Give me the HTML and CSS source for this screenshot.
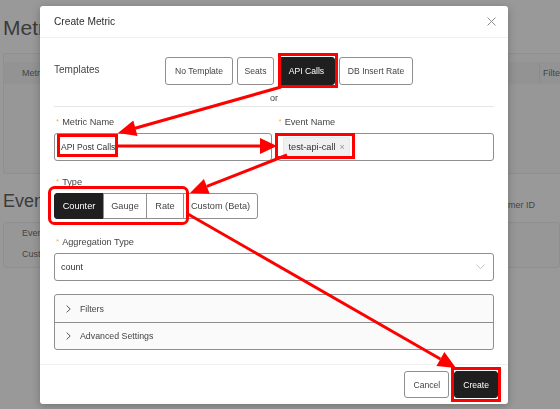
FILE: index.html
```html
<!DOCTYPE html>
<html lang="en">
<head>
<meta charset="utf-8">
<title>Create Metric</title>
<link rel="stylesheet" href="styles.css">
</head>
<body>
<div class="page">
  <h1 class="page-title">Metr</h1>
  <div class="card metrics-card">
    <div class="table-head">
      <span class="th th-first">Metr</span>
      <span class="th th-filter">Filte</span>
    </div>
  </div>
  <div class="events-row">
    <h2 class="events-title">Even</h2>
    <span class="events-col">omer ID</span>
  </div>
  <div class="card events-card">
    <div class="ev-line">Even</div>
    <div class="ev-line">Cust</div>
  </div>
</div>

<div class="modal">
  <div class="modal-header">
    <span class="modal-title">Create Metric</span>
    <svg class="close" width="9" height="9" viewBox="0 0 9 9"><path d="M0.5 0.5 L8.5 8.5 M8.5 0.5 L0.5 8.5" stroke="#8c8c8c" stroke-width="1" fill="none"/></svg>
  </div>
  <div class="modal-body">
    <div class="tpl-row">
      <span class="tpl-label">Templates</span>
      <div class="tpl-buttons">
        <span class="btn tpl-none">No Template</span>
        <span class="btn tpl-seats">Seats</span>
        <span class="btn btn-dark tpl-api">API Calls</span>
        <span class="btn tpl-db">DB Insert Rate</span>
      </div>
    </div>
    <div class="or">or</div>
    <div class="divider"></div>

    <div class="field-grid">
      <div class="field">
        <div class="label"><span class="req">*</span>Metric Name</div>
        <div class="input">API Post Calls</div>
      </div>
      <div class="field">
        <div class="label"><span class="req">*</span>Event Name</div>
        <div class="input input-tags">
          <span class="tag">test-api-call<span class="tag-x">×</span></span>
        </div>
      </div>
    </div>

    <div class="label label-type"><span class="req">*</span>Type</div>
    <div class="segmented">
      <span class="seg seg-active seg-counter">Counter</span>
      <span class="seg seg-gauge">Gauge</span>
      <span class="seg seg-rate">Rate</span>
      <span class="seg seg-custom">Custom (Beta)</span>
    </div>

    <div class="label label-agg"><span class="req">*</span>Aggregation Type</div>
    <div class="input select">
      <span>count</span>
      <svg width="9" height="6" viewBox="0 0 9 6"><path d="M0.5 0.5 L4.5 4.8 L8.5 0.5" stroke="#c2c2c2" stroke-width="1" fill="none"/></svg>
    </div>

    <div class="collapse">
      <div class="collapse-row">
        <svg class="chev" width="5" height="8" viewBox="0 0 5 8"><path d="M0.6 0.6 L4.2 4 L0.6 7.4" stroke="#595959" stroke-width="1" fill="none"/></svg>
        <span>Filters</span>
      </div>
      <div class="collapse-row collapse-row-last">
        <svg class="chev" width="5" height="8" viewBox="0 0 5 8"><path d="M0.6 0.6 L4.2 4 L0.6 7.4" stroke="#595959" stroke-width="1" fill="none"/></svg>
        <span>Advanced Settings</span>
      </div>
    </div>
  </div>
  <div class="modal-footer">
    <span class="btn btn-footer">Cancel</span>
    <span class="btn btn-dark btn-footer">Create</span>
  </div>
</div>

<svg class="annotations" width="560" height="409" viewBox="0 0 560 409">
  <g fill="none" stroke="#ff0000" stroke-width="3">
    <rect x="279.5" y="54.5" width="57" height="32"/>
    <rect x="58.5" y="135.5" width="58" height="20"/>
    <rect x="276.5" y="134.5" width="77" height="23"/>
    <rect x="49.5" y="187.5" width="138" height="36" rx="5"/>
    <rect x="452.5" y="368.5" width="47" height="32"/>
    <line x1="281" y1="87" x2="135" y2="128.3"/>
    <line x1="118" y1="146" x2="261" y2="146"/>
    <line x1="287" y1="155" x2="206.8" y2="186.4"/>
    <line x1="187" y1="213.5" x2="440.4" y2="359"/>
  </g>
  <g fill="#ff0000">
    <polygon points="118,133 133.3,120.6 137.5,136"/>
    <polygon points="277,146 260,138 260,154"/>
    <polygon points="190,193 203.9,179 209.7,193.8"/>
    <polygon points="456,368 436.4,365.9 444.4,352.1"/>
  </g>
</svg>
</body>
</html>
```

FILE: styles.css
```css
html, body {
  margin: 0;
  padding: 0;
  overflow: hidden;
}
body {
  width: 560px;
  height: 409px;
  background: #999999;
  font-family: "Liberation Sans", Arial, sans-serif;
  color: #333;
  position: relative;
}

/* background page (under overlay) */
.page {
  padding: 0 0 0 3px;
  width: 557px;
}
.page-title {
  margin: 16px 0 0;
  font-size: 21px;
  line-height: 24px;
  font-weight: normal;
  color: #3b3b3b;
}
.card {
  background: #979797;
  border: 1px solid #8f8f8f;
  border-radius: 3px;
  box-sizing: border-box;
}
.metrics-card {
  margin-top: 13px;
  height: 121px;
  padding-top: 8px;
  border-right: none;
  border-radius: 3px 0 0 3px;
}
.table-head {
  height: 22px;
  background: #939393;
  display: flex;
  align-items: center;
  justify-content: space-between;
  font-size: 9px;
  color: #454545;
}
.th-first {
  margin-left: 18px;
}
.th-filter {
  border-left: 1px solid #8a8a8a;
  padding-left: 3px;
  width: 17px;
  line-height: 20px;
  white-space: nowrap;
}
.events-row {
  margin-top: 16px;
  display: flex;
  justify-content: space-between;
  align-items: center;
}
.events-title {
  margin: 0;
  font-size: 18px;
  line-height: 22px;
  font-weight: normal;
  color: #3b3b3b;
}
.events-col {
  font-size: 9px;
  color: #454545;
  margin-right: 25px;
  margin-top: 7px;
  white-space: nowrap;
}
.events-card {
  margin-top: 10px;
  height: 46px;
  padding-left: 18px;
}
.ev-line {
  font-size: 9px;
  line-height: 21px;
  color: #454545;
}

/* modal */
.modal {
  position: fixed;
  left: 40px;
  top: 6px;
  width: 468px;
  height: 398px;
  background: #fff;
  border-radius: 3px;
  box-shadow: 0 2px 8px rgba(0, 0, 0, 0.25);
  display: flex;
  flex-direction: column;
  box-sizing: border-box;
}
.modal-header {
  height: 32px;
  box-sizing: border-box;
  border-bottom: 1px solid #f0f0f0;
  display: flex;
  align-items: center;
  justify-content: space-between;
  padding: 0 12px 1px 14px;
}
.modal-title {
  font-size: 10.2px;
  color: #2e2e2e;
}
.modal-body {
  flex: 1;
  padding: 0 14px;
}
.tpl-row {
  display: flex;
  align-items: center;
  padding-top: 19px;
}
.tpl-label {
  width: 111px;
  flex: none;
  font-size: 10px;
  color: #444;
  padding-bottom: 3px;
}
.tpl-buttons {
  display: flex;
  gap: 4px;
}
.btn {
  display: flex;
  align-items: center;
  justify-content: center;
  box-sizing: border-box;
  height: 28px;
  border: 1px solid #8f8f8f;
  border-radius: 3px;
  background: #fff;
  font-size: 8.6px;
  color: #444;
  padding: 0 8px;
  white-space: nowrap;
}
.btn-dark {
  background: #1f1f1f;
  border-color: #1f1f1f;
  color: #fff;
}
.tpl-none { width: 68px; padding: 0; }
.tpl-seats { width: 37px; padding: 0; }
.tpl-api { width: 57px; padding: 0; }
.tpl-db { width: 74px; padding: 0; }
.or {
  text-align: center;
  font-size: 9px;
  line-height: 12px;
  margin-top: 7px;
  color: #444;
}
.divider {
  height: 1px;
  background: #e6e6e6;
  margin-top: 2px;
}
.field-grid {
  display: grid;
  grid-template-columns: 1fr 1fr;
  column-gap: 5px;
  margin-top: 9px;
}
.label {
  font-size: 9.2px;
  line-height: 12px;
  color: #444;
  margin-bottom: 5px;
  display: flex;
  align-items: center;
}
.req {
  color: #f0b45a;
  font-size: 8px;
  margin: 0 3px 0 2px;
}
.input {
  height: 28px;
  box-sizing: border-box;
  border: 1px solid #8f8f8f;
  border-radius: 3px;
  padding: 0 6px;
  display: flex;
  align-items: center;
  font-size: 8.5px;
  color: #333;
  background: #fff;
}
.input-tags {
  padding-left: 5px;
}
.tag {
  height: 21px;
  box-sizing: border-box;
  background: #f0f0f0;
  border: 1px solid #e8e8e8;
  border-radius: 2px;
  display: flex;
  align-items: center;
  padding: 0 4px 0 5px;
  font-size: 9.2px;
  color: #333;
}
.tag-x {
  color: #9a9a9a;
  font-size: 9px;
  margin-left: 4px;
}
.label-type {
  margin-top: 15px;
}
.segmented {
  display: flex;
  height: 26px;
}
.seg {
  display: flex;
  align-items: center;
  justify-content: center;
  box-sizing: border-box;
  height: 26px;
  border: 1px solid #8f8f8f;
  margin-left: -1px;
  font-size: 9.2px;
  color: #444;
  background: #fff;
}
.seg-counter {
  width: 50px;
  margin-left: 0;
  border-radius: 3px 0 0 3px;
}
.seg-gauge { width: 44px; }
.seg-rate { width: 38px; }
.seg-custom {
  width: 75px;
  border-radius: 0 3px 3px 0;
}
.seg-active {
  background: #1f1f1f;
  border-color: #1f1f1f;
  color: #fff;
}
.label-agg {
  margin-top: 17px;
}
.select {
  justify-content: space-between;
  padding-right: 8px;
  font-size: 9px;
}
.collapse {
  margin-top: 13px;
  border: 1px solid #8f8f8f;
  border-radius: 3px;
  background: #fafafa;
}
.collapse-row {
  height: 27px;
  display: flex;
  align-items: center;
  border-bottom: 1px solid #8f8f8f;
  font-size: 8.8px;
  color: #444;
}
.collapse-row-last {
  height: 26px;
  border-bottom: none;
}
.chev {
  margin: 0 9px 0 11px;
}
.modal-footer {
  height: 40px;
  box-sizing: border-box;
  border-top: 1px solid #f0f0f0;
  display: flex;
  align-items: center;
  justify-content: flex-end;
  gap: 5px;
  padding-right: 10px;
}
.btn-footer {
  height: 27px;
}

.annotations {
  position: absolute;
  left: 0;
  top: 0;
  pointer-events: none;
}
```
